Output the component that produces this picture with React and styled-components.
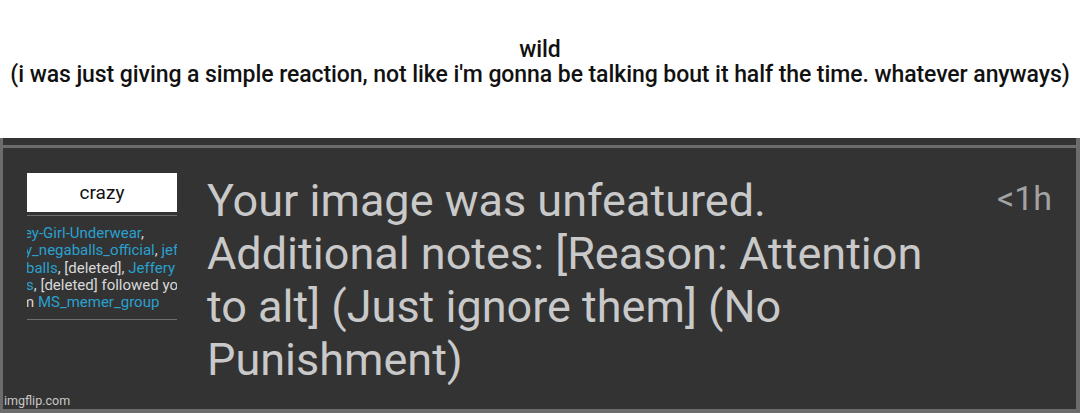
import styled, { createGlobalStyle } from 'styled-components';

const Global = createGlobalStyle`
  body {
    margin: 0;
    background: #ffffff;
    font-family: Roboto, "Liberation Sans", sans-serif;
  }
`;

const Page = styled.div`
  width: 1080px;
  height: 413px;
  display: flex;
  flex-direction: column;
  overflow: hidden;
`;

const Caption = styled.div`
  height: 138px;
  box-sizing: border-box;
  padding-top: 37px;
  text-align: center;
  color: #111;
  font-size: 23px;
  line-height: 25px;
  font-weight: 500;
  letter-spacing: -0.07px;
`;

const Frame = styled.div`
  flex: 1;
  position: relative;
  background: #333333;
  border-left: 3px solid #6c6c6c;
  border-right: 4px solid #6c6c6c;
  border-bottom: 4px solid #6c6c6c;
  padding-top: 7px;
  display: flex;
  flex-direction: column;
`;

const Rule = styled.div`
  height: 3px;
  background: #6c6c6c;
`;

const Row = styled.div`
  display: flex;
  padding: 25px 0 0 24px;
`;

const Side = styled.div`
  width: 150px;
  flex-shrink: 0;
  overflow: hidden;
`;

const Label = styled.div`
  height: 39px;
  background: #fff;
  color: #111;
  font-size: 19px;
  line-height: 39px;
  text-align: center;
`;

const Divider = styled.div`
  height: 1px;
  background: #6e6e6e;
  margin-top: ${p => p.$top || 0}px;
`;

const Names = styled.div`
  padding-top: 9px;
  padding-bottom: 8px;
  font-size: 15px;
  line-height: 17.3px;
  color: #d8d8d8;
`;

const Line = styled.div`
  white-space: nowrap;
  margin-left: ${p => p.$shift || 0}px;
`;

const Link = styled.span`
  color: #2aa0cf;
`;

const Body = styled.div`
  width: 745px;
  flex-shrink: 0;
  margin-left: 30px;
  color: #c9c9c9;
  font-size: 45px;
  line-height: 53px;
  margin-top: 1px;
`;

const Time = styled.div`
  margin-left: auto;
  margin-right: 24px;
  color: #a2a2a2;
  font-size: 34px;
  line-height: 53px;
  margin-top: -1px;
`;

const Watermark = styled.div`
  position: absolute;
  left: 1px;
  bottom: 1px;
  color: #c8c8c8;
  font-size: 12.5px;
  line-height: 15px;
`;

export default function App() {
  return (
    <Page>
      <Global />
      <Caption>
        wild
        <br />
        (i was just giving a simple reaction, not like i'm gonna be talking bout it half the time. whatever anyways)
      </Caption>
      <Frame>
        <Rule />
        <Row>
          <Side>
            <Label>crazy</Label>
            <Divider $top={3} />
            <Names>
              <Line $shift={-3}><Link>ey-Girl-Underwear</Link>,</Line>
              <Line $shift={-2}><Link>y_negaballs_official</Link>, <Link>jeffery</Link></Line>
              <Line $shift={-1}><Link>balls</Link>, [deleted], <Link>Jeffery</Link></Line>
              <Line $shift={-1}><Link>s</Link>, [deleted] followed you</Line>
              <Line $shift={-6}>m <Link>MS_memer_group</Link></Line>
            </Names>
            <Divider />
          </Side>
          <Body>
            Your image was unfeatured.
            <br />
            Additional notes: [Reason: Attention to alt] (Just ignore them] (No Punishment)
          </Body>
          <Time>&lt;1h</Time>
        </Row>
        <Watermark>imgflip.com</Watermark>
      </Frame>
    </Page>
  );
}
